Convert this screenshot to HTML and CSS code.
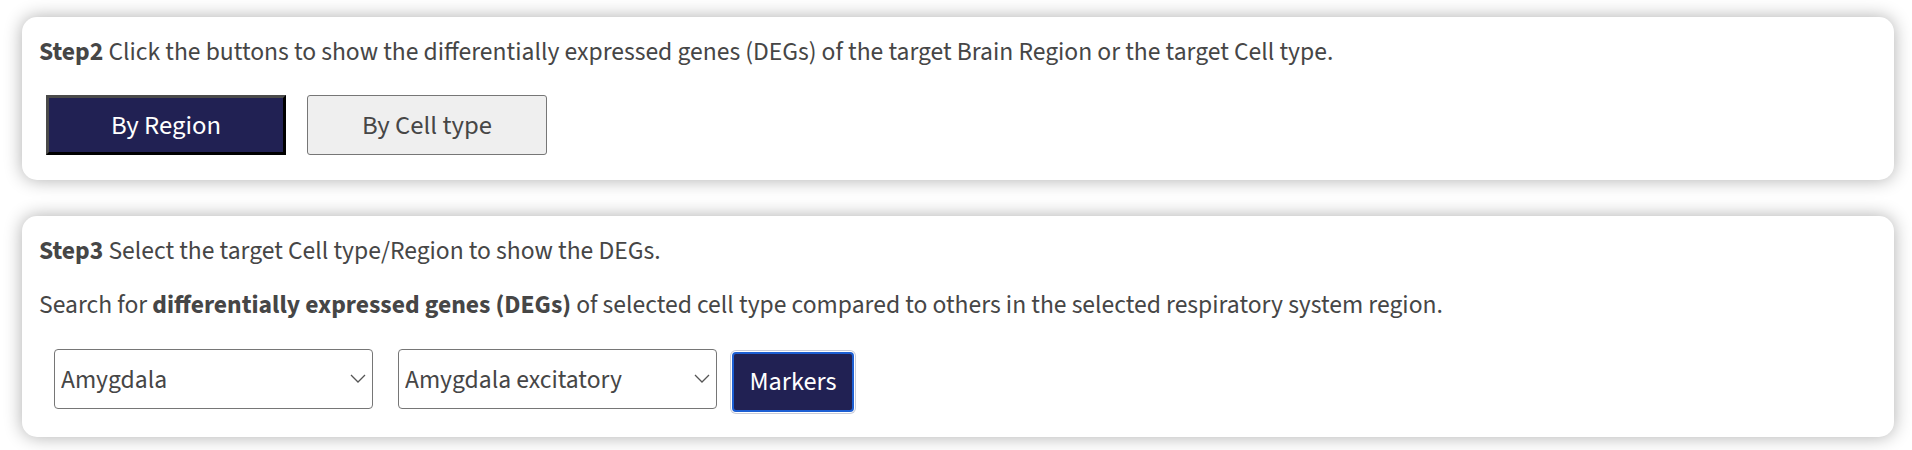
FILE: index.html
```html
<!DOCTYPE html>
<html lang="en">
<head>
<meta charset="utf-8">
<title>DEGs</title>
<link rel="stylesheet" href="styles.css">
</head>
<body>
<main class="page">
  <section class="card card-ghost"></section>

  <section class="card">
    <p class="line"><b>Step2</b> Click the buttons to show the differentially expressed genes (DEGs) of the target Brain Region or the target Cell type.</p>
    <div class="btn-row">
      <button class="mode mode-active" type="button">By Region</button>
      <button class="mode" type="button">By Cell type</button>
    </div>
  </section>

  <section class="card">
    <p class="line"><b>Step3</b> Select the target Cell type/Region to show the DEGs.</p>
    <p class="line">Search for <b>differentially expressed genes (DEGs)</b> of selected cell type compared to others in the selected respiratory system region.</p>
    <div class="select-row">
      <div class="select-wrap">
        <select class="select"><option>Amygdala</option></select>
        <svg class="chev" width="16" height="9" viewBox="0 0 16 9"><path d="M1 1 L8 8 L15 1" fill="none" stroke="#555" stroke-width="1.3"/></svg>
      </div>
      <div class="select-wrap">
        <select class="select"><option>Amygdala excitatory</option></select>
        <svg class="chev" width="16" height="9" viewBox="0 0 16 9"><path d="M1 1 L8 8 L15 1" fill="none" stroke="#555" stroke-width="1.3"/></svg>
      </div>
      <button class="markers" type="button">Markers</button>
    </div>
  </section>

  <section class="card card-ghost"></section>
</main>
</body>
</html>
```

FILE: styles.css
```css
* { box-sizing: border-box; }

html, body {
  margin: 0;
  background: #ffffff;
}

body {
  font-family: "Source Sans 3", "Source Sans Pro", "Lato", sans-serif;
  color: #464646;
  font-size: 25.6px;
}

.page {
  display: flex;
  flex-direction: column;
  gap: 36px;
  padding: 0 18px 0 22px;
  margin-top: -149px;
}

.card {
  background: #fff;
  border-radius: 15px;
  box-shadow: 0 0 18px rgba(0, 0, 0, 0.32);
  padding: 16px 17px 25px;
}

.card-ghost {
  height: 130px;
}

.line {
  margin: 0 0 16px;
  line-height: 38px;
}

.line b { font-weight: 700; }

.card > .line:last-of-type { margin-bottom: 0; }

.btn-row {
  display: flex;
  gap: 21px;
  margin: 24px 0 0 7px;
}

.mode {
  width: 240px;
  height: 60px;
  padding: 2px 0 0;
  font-family: inherit;
  font-size: 26.7px;
  color: #464646;
  background: #efefef;
  border: 1px solid #767676;
  border-radius: 3px;
}

.mode-active {
  color: #fff;
  background: #212153;
  border-radius: 0;
  border-width: 3px;
  border-style: solid;
  border-color: #4a4a4a #000 #000 #4a4a4a;
}

.select-row {
  display: flex;
  align-items: flex-start;
  margin: 25px 0 0 15px;
}

.select-wrap {
  position: relative;
  width: 319px;
  height: 60px;
  margin-right: 25px;
}

.select-wrap:nth-child(2) { margin-right: 15px; }

.select {
  appearance: none;
  -webkit-appearance: none;
  width: 100%;
  height: 100%;
  padding: 2px 6px 0;
  font-family: inherit;
  font-size: 25.6px;
  color: #464646;
  background: #fff;
  border: 1px solid #767676;
  border-radius: 4px;
}

.chev {
  position: absolute;
  right: 7px;
  top: 25px;
  pointer-events: none;
}

.markers {
  margin-top: 3px;
  width: 122px;
  height: 60px;
  font-family: inherit;
  font-size: 26.3px;
  color: #fff;
  background: #212153;
  border: 2px solid #1d5fd3;
  border-radius: 4px;
  box-shadow: 0 0 0 1px #fff, 0 0 0 2px #c9ccd8;
}
```
